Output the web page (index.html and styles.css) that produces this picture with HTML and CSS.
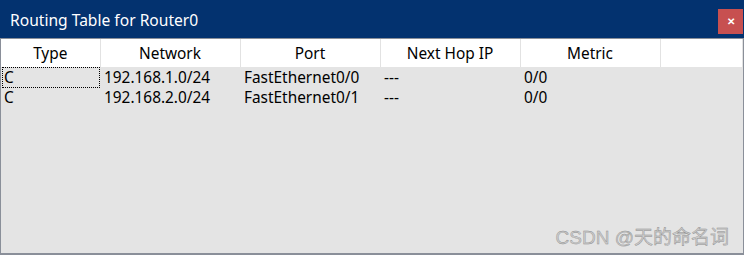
FILE: index.html
```
<!DOCTYPE html>
<html lang="en">

<head>
    <meta charset="UTF-8">
    <title>Routing Table for Router0</title>
    <link rel="stylesheet" href="styles.css">
</head>

<body>
    <div class="window">
        <!-- title bar -->
        <div class="titlebar">
            <span class="title">Routing Table for Router0</span>
            <button class="close">&#x2715;</button>
        </div>
        <!-- table area -->
        <div class="content">
            <table class="routes">
                <colgroup>
                    <col class="c-type">
                    <col class="c-wide">
                    <col class="c-wide">
                    <col class="c-wide">
                    <col class="c-wide">
                    <col>
                </colgroup>
                <thead>
                    <tr>
                        <th>Type</th>
                        <th>Network</th>
                        <th>Port</th>
                        <th>Next Hop IP</th>
                        <th>Metric</th>
                        <th></th>
                    </tr>
                </thead>
                <tbody>
                    <tr>
                        <td><span class="focus">C</span></td>
                        <td>192.168.1.0/24</td>
                        <td>FastEthernet0/0</td>
                        <td>---</td>
                        <td>0/0</td>
                        <td></td>
                    </tr>
                    <tr>
                        <td>C</td>
                        <td>192.168.2.0/24</td>
                        <td>FastEthernet0/1</td>
                        <td>---</td>
                        <td>0/0</td>
                        <td></td>
                    </tr>
                </tbody>
            </table>
            <div class="watermark">CSDN @天的命名词</div>
        </div>
    </div>
</body>

</html>
```

FILE: styles.css
```
/* base */
body {
    margin: 0;
    font-family: "Noto Sans", "Noto Sans CJK SC", sans-serif;
    color: #000;
}

.window {
    width: 744px;
    height: 255px;
    box-sizing: border-box;
    display: flex;
    flex-direction: column;
    background: #e4e4e4;
}

/* title bar */
.titlebar {
    height: 38px;
    flex: none;
    display: flex;
    align-items: center;
    justify-content: space-between;
    padding: 0 1px 0 10px;
    background: #03326f;
    border-bottom: 1px solid #8a8f99;
}

.title {
    color: #fff;
    font-size: 15.6px;
    margin-top: 2px;
}

.close {
    width: 25px;
    height: 25px;
    margin-top: 4px;
    padding: 0;
    border: none;
    background: #c75050;
    color: #fff;
    font-size: 10px;
    font-weight: bold;
    line-height: 25px;
}

/* table area */
.content {
    flex: 1;
    display: flex;
    flex-direction: column;
    border-left: 1px solid #8a8f99;
    border-right: 1px solid #8a8f99;
    border-bottom: 2px solid #8a8f99;
}

.routes {
    border-collapse: collapse;
    table-layout: fixed;
    width: 100%;
    font-size: 15.4px;
}

.c-type {
    width: 99px;
}

.c-wide {
    width: 140px;
}

.routes th {
    height: 28px;
    padding: 0;
    font-weight: normal;
    background: #fff;
    border-right: 1px solid #e2e2e2;
}

.routes td {
    height: 20px;
    padding: 0 0 0 4px;
    line-height: 20px;
    white-space: nowrap;
}

.routes td:first-child {
    padding-left: 3px;
}

.focus {
    display: block;
    height: 19px;
    line-height: 19px;
    margin-left: -2px;
    padding-left: 1px;
    border: 1px dotted #000;
}

.watermark {
    margin-top: auto;
    align-self: flex-end;
    padding: 0 14px 4px 0;
    font-family: "Liberation Sans", "Noto Sans CJK SC", sans-serif;
    font-size: 19px;
    color: #cdcdcd;
    -webkit-text-stroke: 0.4px #8c8c8c;
}
```
